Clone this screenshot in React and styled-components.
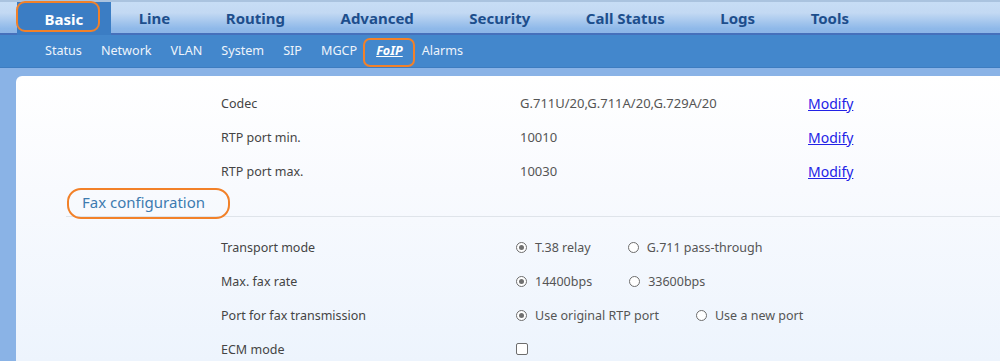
import React from 'react'
import styled, { createGlobalStyle } from 'styled-components'

const Global = createGlobalStyle`
  html, body {
    margin: 0;
    padding: 0;
    background: #8ab3e6;
    overflow: hidden;
  }
  body {
    font-family: "Noto Sans", "Open Sans", sans-serif;
  }
`;

const Page = styled.div`
  width: 1000px;
  height: 361px;
  display: flex;
  flex-direction: column;
  overflow: hidden;
  background: #8ab3e6;
`;

const TopNav = styled.div`
  flex-shrink: 0;
  height: 31px;
  display: flex;
  align-items: stretch;
  padding-left: 17px;
  border-top: 2px solid #aac3df;
  border-bottom: 2px solid #4670bb;
  background: linear-gradient(#c7ddf5 0%, #c3d9f3 35%, #8fb9e9 85%, #8cb5e7 100%);
`;

const Tab = styled.div`
  position: relative;
  display: flex;
  align-items: center;
  padding: 0 28px 0 27.5px;
  margin-bottom: ${p => (p.$active ? '-2px' : '0')};
  font-size: 15px;
  line-height: 20px;
  font-weight: 700;
  color: ${p => (p.$active ? '#ffffff' : '#1d4e8c')};
  background: ${p => (p.$active ? '#3b7dc4' : 'transparent')};
`;

const SubNav = styled.div`
  flex-shrink: 0;
  height: 33px;
  display: flex;
  align-items: center;
  gap: 19px;
  padding-left: 45px;
  box-sizing: border-box;
  background: #4387cc;
  border-bottom: 1px solid #3d7cc0;
`;

const SubItem = styled.div`
  position: relative;
  font-size: 12.6px;
  line-height: 18px;
  font-weight: ${p => (p.$active ? 700 : 400)};
  font-style: ${p => (p.$active ? 'italic' : 'normal')};
  text-decoration: ${p => (p.$active ? 'underline' : 'none')};
  color: ${p => (p.$active ? '#ffffff' : '#eef4fb')};
`;

const Mark = styled.span`
  position: absolute;
  left: ${p => p.$l}px;
  top: ${p => p.$t}px;
  width: ${p => p.$w}px;
  height: ${p => p.$h}px;
  border: 2.5px solid #f28129;
  border-radius: ${p => p.$r}px;
  box-sizing: border-box;
  pointer-events: none;
`;

const Body = styled.div`
  flex: 1;
  min-height: 0;
  display: flex;
  padding-top: 8px;
  padding-left: 16px;
`;

const Card = styled.div`
  flex: 1;
  border-top-left-radius: 6px;
  background: linear-gradient(#ffffff 0%, #f8fafe 40%, #edf4fd 100%);
  padding-top: 10px;
`;

const Rows = styled.div`
  display: grid;
  grid-template-columns: 299px 288px auto;
  grid-auto-rows: 34px;
  padding-left: 205px;
  align-items: center;
`;

const Label = styled.div`
  font-size: 12.5px;
  color: #444;
`;

const Value = styled.div`
  font-size: 13px;
  color: #555;
`;

const Link = styled.a`
  font-size: 14px;
  color: #2222e6;
  text-decoration: underline;
  cursor: pointer;
`;

const Heading = styled.div`
  margin-left: 50px;
  height: 28px;
  border-bottom: 1px solid #dfe4ea;
  display: flex;
  align-items: center;
`;

const HeadingText = styled.div`
  position: relative;
  margin-left: 16px;
  font-size: 15px;
  line-height: 20px;
  color: #3d7bb0;
`;

const FaxRows = styled(Rows)`
  padding-top: 13px;
  grid-template-columns: 295px auto;
`;

const Options = styled.div`
  display: flex;
  align-items: center;
`;

const Option = styled.label`
  display: flex;
  align-items: center;
  margin-right: 37px;
  font-size: 12.5px;
  color: #555;
`;

const Radio = styled.span`
  width: 11px;
  height: 11px;
  box-sizing: border-box;
  border-radius: 50%;
  border: 1px solid #6d6d6d;
  background: #fff;
  margin-right: 8px;
  display: flex;
  align-items: center;
  justify-content: center;
  &::after {
    content: '';
    width: 5px;
    height: 5px;
    border-radius: 50%;
    background: ${p => (p.$checked ? '#707070' : 'transparent')};
  }
`;

const Check = styled.span`
  width: 12px;
  height: 12px;
  box-sizing: border-box;
  border: 1px solid #6d6d6d;
  border-radius: 2px;
  background: #fff;
`;

const tabs = ['Basic', 'Line', 'Routing', 'Advanced', 'Security', 'Call Status', 'Logs', 'Tools'];
const subs = ['Status', 'Network', 'VLAN', 'System', 'SIP', 'MGCP', 'FoIP', 'Alarms'];

const media = [
  ['Codec', 'G.711U/20,G.711A/20,G.729A/20'],
  ['RTP port min.', '10010'],
  ['RTP port max.', '10030'],
];

const fax = [
  ['Transport mode', ['T.38 relay', 'G.711 pass-through']],
  ['Max. fax rate', ['14400bps', '33600bps']],
  ['Port for fax transmission', ['Use original RTP port', 'Use a new port']],
];

const App = () => {
  return (
    <Page>
      <Global />
      <TopNav>
        {tabs.map(t => (
          <Tab key={t} $active={t === 'Basic'}>
            {t}
            {t === 'Basic' && <Mark $l={-1} $t={-1} $w={84} $h={31} $r={9} />}
          </Tab>
        ))}
      </TopNav>
      <SubNav>
        {subs.map(s => (
          <SubItem key={s} $active={s === 'FoIP'}>
            {s}
            {s === 'FoIP' && <Mark $l={-13} $t={-4} $w={52} $h={29} $r={7} />}
          </SubItem>
        ))}
      </SubNav>
      <Body>
        <Card>
          <Rows>
            {media.map(([l, v]) => (
              <React.Fragment key={l}>
                <Label>{l}</Label>
                <Value>{v}</Value>
                <Link>Modify</Link>
              </React.Fragment>
            ))}
          </Rows>
          <Heading>
            <HeadingText>
              Fax configuration
              <Mark $l={-15} $t={-4} $w={163} $h={31} $r={14} />
            </HeadingText>
          </Heading>
          <FaxRows>
            {fax.map(([l, opts]) => (
              <React.Fragment key={l}>
                <Label>{l}</Label>
                <Options>
                  {opts.map((o, i) => (
                    <Option key={o}>
                      <Radio $checked={i === 0} />
                      {o}
                    </Option>
                  ))}
                </Options>
              </React.Fragment>
            ))}
            <Label>ECM mode</Label>
            <Options>
              <Check />
            </Options>
          </FaxRows>
        </Card>
      </Body>
    </Page>
  )
}

export default App
